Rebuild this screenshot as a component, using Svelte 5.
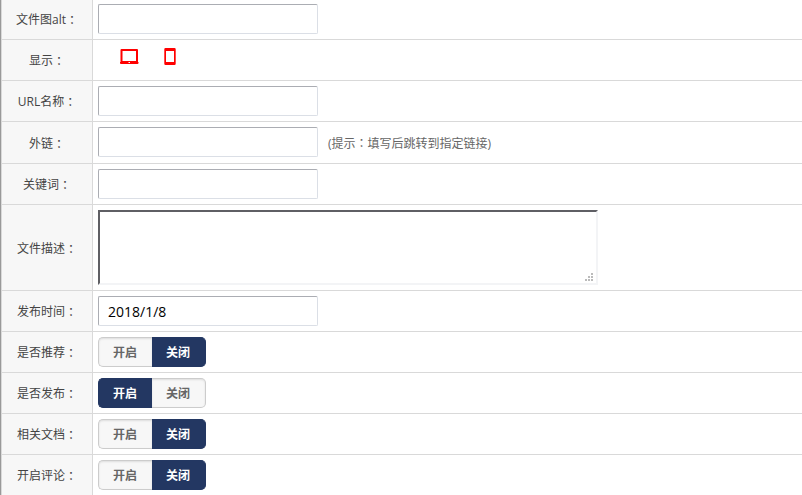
<script lang="ts">
  type Row = {
    id: string;
    label: string;
    kind: "text" | "devices" | "textarea" | "switch";
    hint?: [string, string];
  };

  const rows: Row[] = [
    { id: "alt", label: "文件图alt", kind: "text" },
    { id: "display", label: "显示", kind: "devices" },
    { id: "url", label: "URL名称", kind: "text" },
    { id: "link", label: "外链", kind: "text", hint: ["提示", "填写后跳转到指定链接"] },
    { id: "keywords", label: "关键词", kind: "text" },
    { id: "description", label: "文件描述", kind: "textarea" },
    { id: "date", label: "发布时间", kind: "text" },
    { id: "recommend", label: "是否推荐", kind: "switch" },
    { id: "publish", label: "是否发布", kind: "switch" },
    { id: "related", label: "相关文档", kind: "switch" },
    { id: "comments", label: "开启评论", kind: "switch" },
  ];

  let values = $state<Record<string, string>>({
    alt: "",
    url: "",
    link: "",
    keywords: "",
    description: "",
    date: "2018/1/8",
    recommend: "off",
    publish: "on",
    related: "off",
    comments: "off",
  });

  let desktop = $state(true);
  let mobile = $state(true);
</script>

<form class="form">
  {#each rows as row (row.id)}
    <div class="row" class:first={row.id === "alt"} class:hinted={row.hint}>
      {#if row.kind === "text" || row.kind === "textarea"}
        <label class="name" for={row.id}>{row.label}<span class="colon">：</span></label>
      {:else}
        <span class="name" id="{row.id}-name">{row.label}<span class="colon">：</span></span>
      {/if}
      <div class="field">
        {#if row.kind === "text"}
          <input class="text" type="text" id={row.id} bind:value={values[row.id]} />
          {#if row.hint}
            <span class="hint">({row.hint[0]}<span class="colon">：</span>{row.hint[1]})</span>
          {/if}
        {:else if row.kind === "textarea"}
          <textarea id={row.id} bind:value={values[row.id]}></textarea>
        {:else if row.kind === "devices"}
          <div class="devices" role="group" aria-labelledby="{row.id}-name">
            <button type="button" aria-label="电脑" aria-pressed={desktop} onclick={() => (desktop = !desktop)}>
              <svg width="20" height="17" viewBox="0 0 20 17" fill="red">
                <path
                  fill-rule="evenodd"
                  d="M1.500 1h15.500a1 1 0 0 1 1 1v12h.5v1a1 1 0 0 1-1 1H1a1 1 0 0 1-1-1v-1h.5V2a1 1 0 0 1 1-1zM2.500 3v10H16V3zM8.500 14v1H10v-1z"
                />
              </svg>
            </button>
            <button type="button" aria-label="手机" aria-pressed={mobile} onclick={() => (mobile = !mobile)}>
              <svg width="12" height="17" viewBox="0 0 12 17" fill="red">
                <path
                  fill-rule="evenodd"
                  d="M1.500 0h9A1.200 1.200 0 0 1 11.700 1.200v14.600a1.200 1.200 0 0 1-1.200 1.200h-9A1.200 1.200 0 0 1 .3 15.800V1.200A1.200 1.200 0 0 1 1.500 0zM2 3v11h8V3z"
                />
              </svg>
            </button>
          </div>
        {:else}
          <div class="switch" role="radiogroup" aria-labelledby="{row.id}-name">
            <label>
              <input type="radio" name={row.id} value="on" bind:group={values[row.id]} />
              <span>开启</span>
            </label>
            <label>
              <input type="radio" name={row.id} value="off" bind:group={values[row.id]} />
              <span>关闭</span>
            </label>
          </div>
        {/if}
      </div>
    </div>
  {/each}
</form>

<style>
  :global(body) {
    margin: 0;
    background: #fff;
    overflow: hidden;
  }

  .form {
    border-left: 1px solid #999;
    color: #444;
    font: 12px/18px "Open Sans", "Noto Sans CJK SC", sans-serif;
  }

  .row {
    display: grid;
    grid-template-columns: 92px 1fr;
    min-height: 40px;
    border-bottom: 1px solid #d9d9d9;
  }

  .row.first {
    min-height: 39px;
  }

  .name {
    display: flex;
    align-items: center;
    justify-content: center;
    padding-top: 2px;
    border-left: 1px solid #d9d9d9;
    border-right: 1px solid #d9d9d9;
    background: #f7f7f7;
  }

  .first .name {
    padding-top: 0;
  }

  .colon {
    font-family: "Noto Sans CJK TC", sans-serif;
  }

  .field {
    display: flex;
    align-items: center;
    padding: 5px;
  }

  .first .field {
    padding-top: 4px;
  }

  .hinted .field {
    padding-bottom: 6px;
  }

  .text {
    box-sizing: border-box;
    width: 220px;
    height: 30px;
    padding: 3px 9px;
    border: 1px solid;
    border-color: #abadb3 #dbdfe6 #dbdfe6 #abadb3;
    border-radius: 2px;
    color: #000;
    font: 14px/20px "Open Sans", "Noto Sans CJK SC", sans-serif;
  }

  .hint {
    margin-left: 10px;
    padding-top: 2px;
    color: #666;
  }

  textarea {
    box-sizing: border-box;
    display: block;
    width: 500px;
    height: 75px;
    border: 2px solid;
    border-color: #5f5f64 #f3f4f6 #f3f4f6 #5f5f64;
    font: inherit;
  }

  textarea::-webkit-resizer {
    background: url("data:image/svg+xml,%3Csvg xmlns='http://www.w3.org/2000/svg' width='12' height='12' fill='%23bbb'%3E%3Cpath d='M7 2h2v2H7zM4 5h2v2H4zM7 5h2v2H7zM1 8h2v2H1zM4 8h2v2H4zM7 8h2v2H7z'/%3E%3C/svg%3E")
      no-repeat right bottom;
  }

  .devices {
    display: flex;
    align-items: center;
    gap: 24px;
    padding: 0 22px 8px;
  }

  .devices button {
    padding: 0;
    border: 0;
    background: none;
    cursor: pointer;
  }

  .devices svg {
    display: block;
  }

  .switch {
    display: flex;
  }

  .switch label {
    position: relative;
    cursor: pointer;
  }

  .switch input {
    position: absolute;
    margin: 0;
    opacity: 0;
  }

  .switch span {
    box-sizing: border-box;
    display: block;
    width: 54px;
    height: 30px;
    border: 1px solid #ccc;
    background: #f7f7f7;
    box-shadow: inset 0 1px 2px #ddd;
    color: #666;
    font-weight: bold;
    line-height: 30px;
    text-align: center;
  }

  .switch label:first-child span {
    padding-right: 1px;
    border-right: 0;
    border-radius: 5px 0 0 5px;
  }

  .switch label:last-child span {
    padding-right: 1px;
    border-left: 0;
    border-radius: 0 5px 5px 0;
  }

  .switch input:checked + span {
    border-color: #233762;
    background: #233762;
    box-shadow: none;
    color: #fff;
  }
</style>
